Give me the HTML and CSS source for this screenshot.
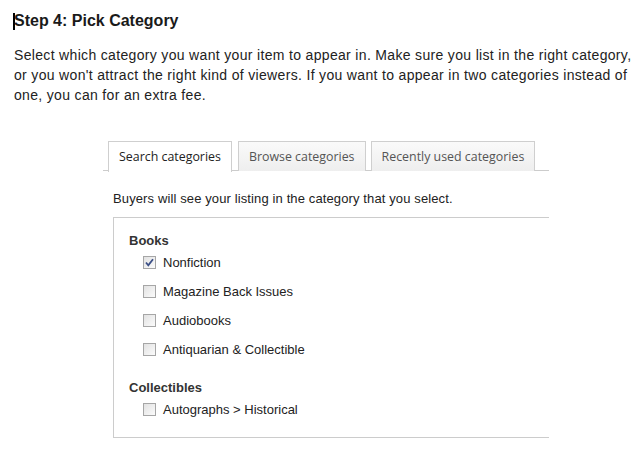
FILE: index.html
```html
<!DOCTYPE html>
<html>
<head>
<meta charset="utf-8">
<link rel="stylesheet" href="styles.css">
</head>
<body>
<div class="page">
  <h1 class="title"><span class="caret"></span>Step 4: Pick Category</h1>
  <p class="intro">Select which category you want your item to appear in. Make sure you list in the right category, or you won't attract the right kind of viewers. If you want to appear in two categories instead of one, you can for an extra fee.</p>
  <div class="picker">
    <div class="tabs">
      <div class="tab active">Search categories</div>
      <div class="tab">Browse categories</div>
      <div class="tab">Recently used categories</div>
    </div>
    <p class="hint">Buyers will see your listing in the category that you select.</p>
    <div class="results">
      <div class="group">
        <div class="group-title">Books</div>
        <label class="row"><span class="box checked"><svg viewBox="0 0 11 11" width="11" height="11"><path d="M2 5.5 L4.3 8.3 L9 2.2" fill="none" stroke="#3b4f86" stroke-width="1.8"/></svg></span>Nonfiction</label>
        <label class="row"><span class="box"></span>Magazine Back Issues</label>
        <label class="row"><span class="box"></span>Audiobooks</label>
        <label class="row"><span class="box"></span>Antiquarian &amp; Collectible</label>
      </div>
      <div class="group">
        <div class="group-title">Collectibles</div>
        <label class="row"><span class="box"></span>Autographs &gt; Historical</label>
      </div>
    </div>
  </div>
</div>
</body>
</html>
```
FILE: styles.css
```css
* { box-sizing: border-box; }
html, body { margin: 0; padding: 0; background: #fff; }
body { font-family: "Liberation Sans", Arial, sans-serif; color: #222; }
.page { padding: 9px 0 0 14px; width: 643px; }
.title {
  margin: 0;
  font-size: 16px;
  line-height: 24px;
  font-weight: bold;
  color: #1a1a1a;
  display: flex;
  align-items: center;
}
.caret { width: 2px; height: 17px; background: #000; margin-left: -1px; margin-right: -1px; }
.intro {
  margin: 12px 0 0 0;
  font-size: 14px;
  line-height: 20px;
  letter-spacing: 0.33px;
  width: 625px;
  color: #222;
}
.picker { margin: 36px 0 0 89px; width: 446px; }
.tabs {
  display: flex;
  padding-left: 5px;
  border-bottom: 1px solid #cccccc;
  height: 30px;
}
.tab {
  font-family: "Open Sans", sans-serif;
  font-size: 12.4px;
  color: #555;
  height: 30px;
  padding: 6px 10px 0 10px;
  border: 1px solid #cfcfcf;
  border-bottom: none;
  background: linear-gradient(#fafafa, #eeeeee);
}
.tab + .tab { margin-left: 6px; }
.tab + .tab + .tab { margin-left: 5px; }
.tab.active {
  background: #fff;
  color: #222;
  margin-bottom: -1px;
  height: 31px;
}
.hint {
  margin: 20px 0 0 10px;
  font-size: 13px;
  line-height: 16px;
  letter-spacing: 0.12px;
  color: #222;
}
.results {
  margin: 10px 0 0 10px;
  border: 1px solid #cccccc;
  border-right: none;
  padding: 16px 0 13px 15px;
}
.group + .group { margin-top: 17px; }
.group-title { font-size: 13px; font-weight: bold; line-height: 14px; color: #333; }
.row {
  display: flex;
  align-items: center;
  height: 29px;
  padding-left: 14px;
  font-size: 13px;
  color: #222;
}
.box {
  width: 13px;
  height: 13px;
  border: 1px solid #a6a6a6;
  background: linear-gradient(135deg, #e2e2e2, #fbfbfb);
  margin-right: 7px;
  display: flex;
  align-items: center;
  justify-content: center;
}
.box svg { display: block; }
```
